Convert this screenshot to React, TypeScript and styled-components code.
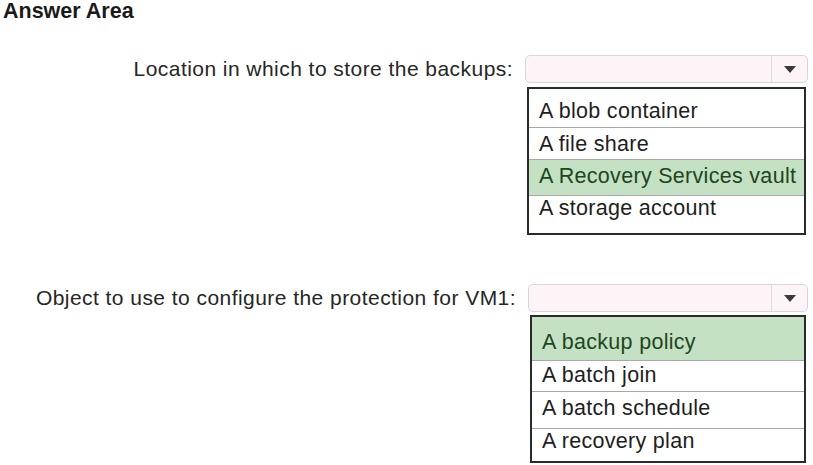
import React from 'react';
import { styled, createGlobalStyle } from 'styled-components';

interface Choice {
	text: string;
	height: number;
	padTop: number;
	correct?: boolean;
}

interface QuestionData {
	label: string;
	width: number;
	gapAbove: number;
	listGap: number;
	choices: Choice[];
}

const questions: QuestionData[] = [
	{
		label: 'Location in which to store the backups:',
		width: 283,
		gapAbove: 33,
		listGap: 4,
		choices: [
			{ text: 'A blob container', height: 38, padTop: 10 },
			{ text: 'A file share', height: 31, padTop: 4 },
			{ text: 'A Recovery Services vault', height: 35, padTop: 4, correct: true },
			{ text: 'A storage account', height: 37, padTop: 0 },
		],
	},
	{
		label: 'Object to use to configure the protection for VM1:',
		width: 280,
		gapAbove: 49,
		listGap: 3,
		choices: [
			{ text: 'A backup policy', height: 43, padTop: 13, correct: true },
			{ text: 'A batch join', height: 30, padTop: 2 },
			{ text: 'A batch schedule', height: 36, padTop: 4 },
			{ text: 'A recovery plan', height: 32, padTop: 0 },
		],
	},
];

function Question({ data }: { data: QuestionData }) {
	return (
		<Row gapAbove={data.gapAbove}>
			<Label>{data.label}</Label>
			<Field width={data.width}>
				<Select>
					<SelectValue />
					<ArrowCell>
						<Arrow />
					</ArrowCell>
				</Select>
				<List listGap={data.listGap}>
					{data.choices.map((c) => (
						<Option key={c.text} h={c.height} padTop={c.padTop} correct={c.correct}>
							{c.text}
						</Option>
					))}
				</List>
			</Field>
		</Row>
	);
}

function App() {
	return (
		<>
			<GlobalStyle />
			<Page>
				<Header>Answer Area</Header>
				{questions.map((q) => (
					<Question key={q.label} data={q} />
				))}
			</Page>
		</>
	);
}

export default App;

const GlobalStyle = createGlobalStyle`
	body {
		margin: 0;
		background: #ffffff;
		font-family: 'Liberation Sans', Arial, sans-serif;
	}
`;

const Page = styled.div`
	width: 813px;
	height: 465px;
	display: flex;
	flex-direction: column;
	overflow: hidden;
`;

const Header = styled.div`
	height: 22px;
	line-height: 22px;
	padding-left: 3px;
	font-size: 21.5px;
	font-weight: bold;
	color: #1a1a1a;
`;

const Row = styled.div<{ gapAbove: number }>`
	display: flex;
	justify-content: flex-end;
	align-items: flex-start;
	gap: 12px;
	padding-right: 5px;
	margin-top: ${(p) => p.gapAbove}px;
`;

const Label = styled.div`
	height: 28px;
	display: flex;
	align-items: center;
	font-size: 21px;
	letter-spacing: 0.45px;
	color: #262626;
	white-space: nowrap;
`;

const Field = styled.div<{ width: number }>`
	width: ${(p) => p.width}px;
	display: flex;
	flex-direction: column;
`;

const Select = styled.div`
	height: 28px;
	box-sizing: border-box;
	display: flex;
	border: 1px solid #d6d6d6;
	border-radius: 5px;
	background: #fcf4f6;
`;

const SelectValue = styled.div`
	flex: 1;
	border-right: 1px solid #dcdcdc;
`;

const ArrowCell = styled.div`
	width: 35px;
	display: flex;
	align-items: center;
	justify-content: center;
`;

const Arrow = styled.div`
	width: 0;
	height: 0;
	border-left: 6px solid transparent;
	border-right: 6px solid transparent;
	border-top: 7px solid #3a3a3a;
`;

const List = styled.div<{ listGap: number }>`
	margin-top: ${(p) => p.listGap}px;
	margin-left: 2px;
	width: calc(100% - 4px);
	box-sizing: border-box;
	border: 2px solid #2a2a2a;
	background: #ffffff;
`;

const Option = styled.div<{ h: number; padTop: number; correct?: boolean }>`
	height: ${(p) => p.h}px;
	box-sizing: content-box;
	padding-left: 10px;
	line-height: 24px;
	font-size: 21.5px;
	letter-spacing: 0.3px;
	white-space: nowrap;
	color: ${(p) => (p.correct ? '#1d4620' : '#1e1e1e')};
	background: ${(p) => (p.correct ? '#c5e1c3' : 'transparent')};
	border-bottom: 1px solid #a8a8a8;

	&::before {
		content: '';
		display: block;
		height: ${(p) => p.padTop}px;
	}

	&:last-child {
		border-bottom: none;
	}
`;
